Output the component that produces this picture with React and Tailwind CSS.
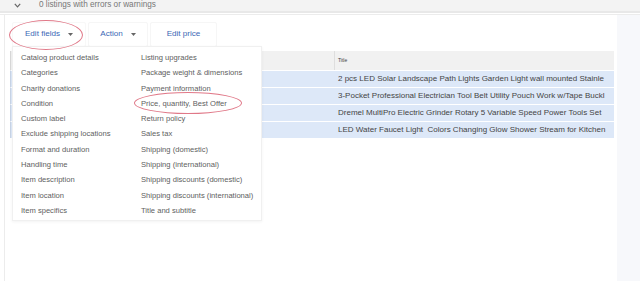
import React from "react";

const leftItems = [
  "Catalog product details",
  "Categories",
  "Charity donations",
  "Condition",
  "Custom label",
  "Exclude shipping locations",
  "Format and duration",
  "Handling time",
  "Item description",
  "Item location",
  "Item specifics",
];

const rightItems = [
  "Listing upgrades",
  "Package weight & dimensions",
  "Payment information",
  "Price, quantity, Best Offer",
  "Return policy",
  "Sales tax",
  "Shipping (domestic)",
  "Shipping (international)",
  "Shipping discounts (domestic)",
  "Shipping discounts (international)",
  "Title and subtitle",
];

// only the part that fits in the column is shown in the screenshot
const titles = [
  "2 pcs LED Solar Landscape Path Lights Garden Light wall mounted Stainle",
  "3-Pocket Professional Electrician Tool Belt Utility Pouch Work w/Tape Buckl",
  "Dremel MultiPro Electric Grinder Rotary 5 Variable Speed Power Tools Set",
  "LED Water Faucet Light  Colors Changing Glow Shower Stream for Kitchen",
];

const Caret = () => (
  <svg width="5" height="3" viewBox="0 0 5 3" className="ml-[8px]">
    <path d="M0 0 L5 0 L2.5 3 Z" fill="#666" />
  </svg>
);

const App = () => {
  return (
    <div
      className="relative w-[640px] h-[281px] overflow-hidden bg-white"
      style={{ fontFamily: '"Liberation Sans", Arial, sans-serif' }}
    >
      {/* status bar */}
      <div className="h-[13px] bg-[#f3f3f3] border-b-2 border-[#e8e8e8] flex items-center">
        <svg width="7" height="5" viewBox="0 0 7 5" className="ml-[14px]">
          <path d="M0.8 0.8 L3.5 3.8 L6.2 0.8" stroke="#666" strokeWidth="1.2" fill="none" />
        </svg>
        <span className="ml-[18px] text-[8.2px] text-[#777] leading-none">
          0 listings with errors or warnings
        </span>
      </div>
      <div className="h-[1px] mt-[1px] bg-[#ececec]" />

      <div className="flex h-[266px]">
        {/* main panel */}
        <div className="w-[612px] ml-[4px] border-l border-[#ececec] bg-white">
          <div className="flex items-center pt-[7px] pl-[7px] gap-[2px]">
            <button className="h-[25px] w-[74px] flex items-center justify-center border border-[#f8f8f8] rounded-[2px] text-[8.1px] text-[#3b68b5]">
              Edit fields
              <Caret />
            </button>
            <button className="h-[25px] w-[60px] flex items-center justify-center border border-[#f6f6f6] rounded-[2px] text-[8.1px] text-[#3b68b5]">
              Action
              <Caret />
            </button>
            <button className="h-[25px] w-[67px] flex items-center justify-center border border-[#f6f6f6] rounded-[2px] text-[8.1px] text-[#3b68b5]">
              Edit price
            </button>
          </div>

          {/* table */}
          <div className="mt-[4px] ml-[5px] w-[604px]">
            <div className="flex h-[19px] bg-[#f1f1f1] border-l border-[#d8d8d8]">
              <div className="w-[324px] border-r border-[#dedede]" />
              <div className="flex-1 flex items-center pl-[3px] text-[5px] text-[#444]">Title</div>
            </div>
            {titles.map((t) => (
              <div key={t} className="flex h-[17px] bg-[#dde8f8] border-t border-white border-l border-l-[#c8d4e6]">
                <div className="w-[324px]" />
                <div className="flex-1 flex items-center pl-[3px] text-[8px] text-[#444] whitespace-pre">
                  {t}
                </div>
              </div>
            ))}
          </div>
        </div>
        <div className="flex-1 bg-[#f7f8fb] ml-[1px]" />
      </div>

      {/* dropdown menu */}
      <div className="absolute left-[12px] top-[46px] w-[250px] h-[175px] bg-white border border-[#f0f0f0] shadow-[0_1px_3px_rgba(0,0,0,0.05)] pt-[3px] pl-[8px] flex">
        <div className="w-[120px] flex flex-col">
          {leftItems.map((i) => (
            <div key={i} className="h-[15.3px] flex items-center text-[7.6px] text-[#606060] whitespace-nowrap">
              {i}
            </div>
          ))}
        </div>
        <div className="flex flex-col">
          {rightItems.map((i) => (
            <div key={i} className="h-[15.3px] flex items-center text-[7.6px] text-[#606060] whitespace-nowrap">
              {i}
            </div>
          ))}
        </div>
      </div>

      {/* annotation ellipses */}
      <div className="absolute left-[9px] top-[20px] w-[74px] h-[30px] rounded-[50%] border border-[#e07888]" />
      <div className="absolute left-[134px] top-[92px] w-[108px] h-[22px] rounded-[50%] border border-[#e07888]" />
    </div>
  );
};

export default App;
